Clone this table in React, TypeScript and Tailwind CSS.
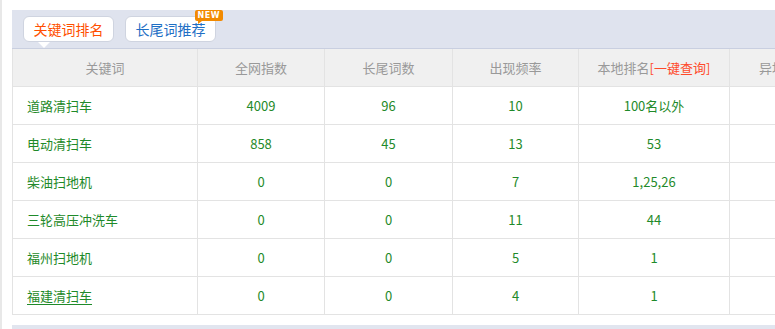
const rows = [
  { kw: "道路清扫车", all: "4009", tail: "96", freq: "10", local: "100名以外" },
  { kw: "电动清扫车", all: "858", tail: "45", freq: "13", local: "53" },
  { kw: "柴油扫地机", all: "0", tail: "0", freq: "7", local: "1,25,26" },
  { kw: "三轮高压冲洗车", all: "0", tail: "0", freq: "11", local: "44" },
  { kw: "福州扫地机", all: "0", tail: "0", freq: "5", local: "1" },
  { kw: "福建清扫车", all: "0", tail: "0", freq: "4", local: "1", link: true },
];

const font = { fontFamily: '"Microsoft YaHei", "Noto Sans CJK SC", "Noto Sans", sans-serif' };

export default function App() {
  return (
    <div className="h-[329px] w-[775px] overflow-hidden bg-white flex" style={font}>
      <div className="w-[2px] shrink-0 bg-[#e8e8e8]" />
      <div className="ml-[10px] w-[900px] shrink-0 pt-[10px]">
        {/* tab bar */}
        <div className="h-[39px] bg-[#dfe3ee] border-b border-[#c9cfe0] flex items-start pt-[6px] pl-[11px] gap-[11px]">
          <div className="relative h-[26px] w-[91px] rounded-[6px] border border-[#cfd4e0] bg-white flex items-center justify-center text-[14px] text-[#ff4f00]">
            关键词排名
            <div className="absolute left-[14px] -bottom-[7px] w-0 h-0 border-x-[6px] border-x-transparent border-t-[6px] border-t-white" />
          </div>
          <div className="relative h-[26px] w-[91px] rounded-[6px] border border-[#cfd4e0] bg-white flex items-center justify-center text-[14px] text-[#1f6fc5]">
            长尾词推荐
            <div className="absolute -right-[8px] -top-[7px] h-[11px] px-[3px] rounded-[2px] bg-[#f28a00] text-white text-[8px] font-bold leading-[11px] tracking-[0.5px]" style={{ fontFamily: '"DejaVu Sans", sans-serif' }}>
              NEW
              <div className="absolute left-[3px] -bottom-[3px] w-0 h-0 border-r-[4px] border-r-transparent border-t-[3px] border-t-[#f28a00]" />
            </div>
          </div>
        </div>

        {/* table */}
        <div className="border-l border-[#e3e3e3] text-[13px]">
          <div className="flex h-[38px] bg-[#f0f0f0] border-b border-[#e3e3e3] text-[#999]">
            <div className="w-[185px] shrink-0 border-r border-[#e3e3e3] flex items-center justify-center">关键词</div>
            <div className="w-[127px] shrink-0 border-r border-[#e3e3e3] flex items-center justify-center">全网指数</div>
            <div className="w-[128px] shrink-0 border-r border-[#e3e3e3] flex items-center justify-center">长尾词数</div>
            <div className="w-[126px] shrink-0 border-r border-[#e3e3e3] flex items-center justify-center">出现频率</div>
            <div className="w-[151px] shrink-0 border-r border-[#e3e3e3] flex items-center justify-center">
              本地排名<span className="text-[#ff4a2a]">[一键查询]</span>
            </div>
            <div className="w-[150px] shrink-0 flex items-center pl-[29px] whitespace-nowrap">异地排名</div>
          </div>
          {rows.map((r) => (
            <div key={r.kw} className="flex h-[38px] border-b border-[#e3e3e3] text-[#1f8a2a]">
              <div className="w-[185px] shrink-0 border-r border-[#e3e3e3] flex items-center pl-[14px]">
                <span className={r.link ? "underline underline-offset-[3px]" : ""}>{r.kw}</span>
              </div>
              <div className="w-[127px] shrink-0 border-r border-[#e3e3e3] flex items-center justify-center">{r.all}</div>
              <div className="w-[128px] shrink-0 border-r border-[#e3e3e3] flex items-center justify-center">{r.tail}</div>
              <div className="w-[126px] shrink-0 border-r border-[#e3e3e3] flex items-center justify-center">{r.freq}</div>
              <div className="w-[151px] shrink-0 border-r border-[#e3e3e3] flex items-center justify-center">{r.local}</div>
              <div className="w-[150px] shrink-0" />
            </div>
          ))}
        </div>

        <div className="mt-[10px] h-[10px] bg-[#e1e5ef]" />
      </div>
    </div>
  );
}
